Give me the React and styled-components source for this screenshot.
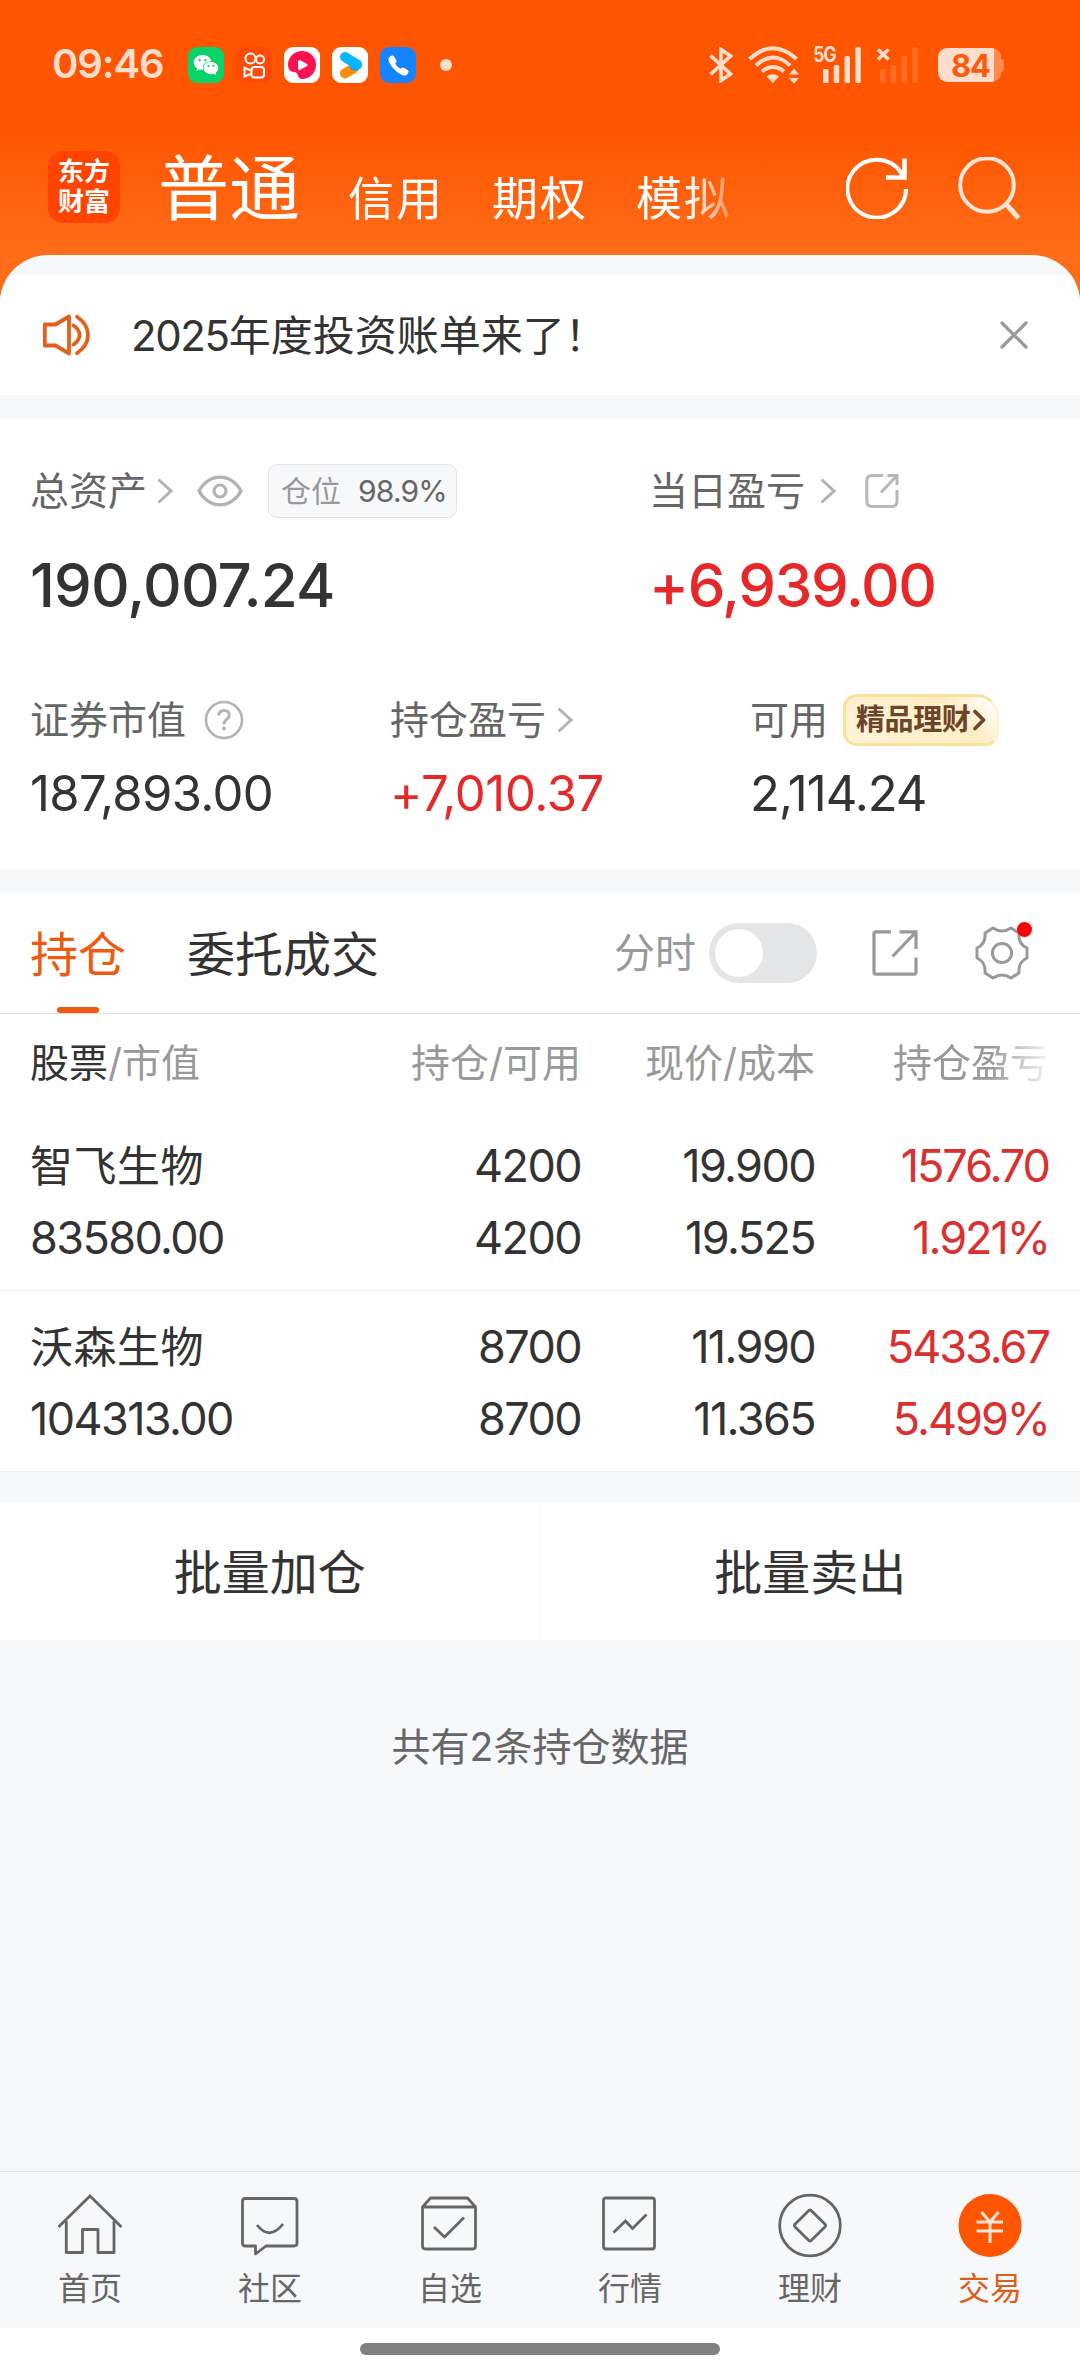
import React from "react";
import styled, { createGlobalStyle } from "styled-components";
import { AiFillWechat } from "react-icons/ai";
import { IoCall } from "react-icons/io5";

const GlobalStyle = createGlobalStyle`
  * {
    box-sizing: border-box;
  }
  body {
    margin: 0;
    background: #ffffff;
    font-family: Inter, "Noto Sans CJK SC", sans-serif;
    color: #333333;
  }
  svg {
    display: block;
    flex: none;
  }
`;

const Page = styled.div`
  width: 1080px;
  height: 2376px;
  display: flex;
  flex-direction: column;
  overflow: hidden;
  background: linear-gradient(#ff5500 0, #ff5500 132px, #ff6d1a 258px, #ff6d1a 320px, #ffffff 320px);
`;

const StatusBar = styled.div`
  height: 130px;
  padding: 0 76px 0 52px;
  display: flex;
  align-items: center;
  color: #ffddcc;
`;

const Clock = styled.div`
  width: 136px;
  font-size: 40px;
  font-weight: 600;
  line-height: 40px;
  letter-spacing: -1.1px;
  margin-top: -3px;
`;

const AppIcons = styled.div`
  display: flex;
  gap: 12px;
`;

const AppIcon = styled.div`
  width: 36px;
  height: 36px;
  border-radius: 9px;
  background: ${(props) => props.$bg};
  display: flex;
  align-items: center;
  justify-content: center;
  color: #ffffff;
`;

const MoreDot = styled.div`
  width: 12px;
  height: 12px;
  margin-left: 24px;
  border-radius: 50%;
  background: #ffddcc;
`;

const StatusRight = styled.div`
  margin-left: auto;
  display: flex;
  align-items: center;
`;

const StatusGroup = styled.div`
  display: flex;
  align-items: center;
  gap: ${(props) => props.$gap}px;
`;

const Header = styled.div`
  height: 125px;
  padding: 0 60px 0 48px;
  display: flex;
`;

const Logo = styled.div`
  width: 72px;
  height: 72px;
  margin-top: 21px;
  padding-top: 6px;
  border-radius: 15px;
  background: #ff4400;
  color: #ffffff;
  font-size: 26px;
  font-weight: 700;
  line-height: 30px;
  text-align: center;
`;

const Accounts = styled.div`
  width: 620px;
  margin-left: 38px;
  display: flex;
  color: #ffffff;
  font-size: 46px;
  line-height: 60px;
  letter-spacing: 2px;
  white-space: nowrap;
  overflow: hidden;
  -webkit-mask-image: linear-gradient(90deg, #000 0, #000 532px, transparent 590px);
  mask-image: linear-gradient(90deg, #000 0, #000 532px, transparent 590px);
`;

const Account = styled.span`
  flex: none;
  width: 144px;
  padding-top: 38px;
`;

const ActiveAccount = styled.span`
  flex: none;
  width: 190px;
  padding-top: 28px;
  font-size: 71px;
  letter-spacing: 0;
`;

const HeaderIcons = styled.div`
  margin-left: auto;
  padding-top: 27px;
  display: flex;
  gap: 50px;
`;

const Sheet = styled.div`
  flex: 1;
  padding-top: 20px;
  display: flex;
  flex-direction: column;
  overflow: hidden;
  border-radius: 48px 48px 0 0;
  background: #f7f8fa;
`;

const Notice = styled.div`
  height: 120px;
  padding: 0 52px 0 42px;
  display: flex;
  align-items: center;
  background: #ffffff;
  font-size: 42px;
  line-height: 60px;
`;

const NoticeText = styled.div`
  flex: 1;
  margin-left: 40px;
  padding-top: 1px;
`;

const NoticeYear = styled.span`
  letter-spacing: -1.4px;
`;

const Summary = styled.div`
  height: 450px;
  margin-top: 24px;
  padding: 44px 30px 0;
  background: #ffffff;
`;

const SummaryRow = styled.div`
  display: grid;
  grid-template-columns: ${(props) => props.$columns};
  margin-bottom: 73px;
`;

const Label = styled.div`
  height: 56px;
  display: flex;
  align-items: center;
  color: #666666;
  font-size: 39px;
  line-height: 56px;
  white-space: nowrap;
  svg {
    margin-left: ${(props) => (props.$gap === undefined ? 12 : props.$gap)}px;
  }
  svg + svg {
    margin-left: ${(props) => props.$iconGap || 24}px;
  }
`;

const Amount = styled.div`
  margin-top: ${(props) => (props.$large ? 32 : 14)}px;
  font-size: ${(props) => (props.$large ? 60 : 49)}px;
  font-weight: ${(props) => (props.$large ? 500 : 400)};
  line-height: ${(props) => (props.$large ? 68 : 64)}px;
  letter-spacing: ${(props) => props.$tracking || 0}px;
  color: ${(props) => (props.$up ? "#e82828" : "#333333")};
`;

const PositionTag = styled.div`
  width: 189px;
  height: 54px;
  margin-left: 25px;
  padding: 0 9px 0 12px;
  display: flex;
  align-items: center;
  justify-content: space-between;
  border: 1px solid #e3e4e6;
  border-radius: 9px;
  background: #f7f8fa;
  color: #999999;
  font-size: 30px;
  line-height: 52px;
  b {
    color: #666666;
    font-weight: 400;
    letter-spacing: -0.8px;
  }
`;

const WealthTag = styled.div`
  width: 156px;
  height: 52px;
  margin-left: 15px;
  padding-left: 10px;
  display: flex;
  align-items: center;
  border: 3px solid #fae29a;
  border-right-color: #fff5d6;
  border-radius: 14px 22px 14px 14px;
  background: linear-gradient(45deg, #fff3d8, #ffedc4 70%, #ffffff);
  color: #6b4528;
  font-size: 29px;
  font-weight: 700;
  line-height: 46px;
  letter-spacing: -0.4px;
  svg {
    margin-left: 3px;
  }
`;

const Holdings = styled.div`
  margin-top: 24px;
  background: #ffffff;
`;

const TabRow = styled.div`
  height: 121px;
  padding: 0 51px 0 30px;
  display: flex;
  border-bottom: 1px solid #e0e0e0;
`;

const Tab = styled.div`
  height: 120px;
  margin-right: 61px;
  display: flex;
  flex-direction: column;
  align-items: center;
  color: ${(props) => (props.$active ? "#f05a10" : "#333333")};
  font-size: 48px;
  line-height: 60px;
  padding-top: 32px;
  &::after {
    content: "";
    width: 42px;
    height: 6px;
    margin-top: 22px;
    border-radius: 3px;
    background: ${(props) => (props.$active ? "#f05a10" : "transparent")};
  }
`;

const Tools = styled.div`
  margin-left: auto;
  display: flex;
  align-items: center;
  color: #999999;
  font-size: 41px;
  line-height: 60px;
`;

const Toggle = styled.div`
  width: 108px;
  height: 60px;
  margin: 0 55px 0 13px;
  padding: 6px;
  border-radius: 30px;
  background: #e4e5e7;
  &::after {
    content: "";
    display: block;
    width: 48px;
    height: 48px;
    border-radius: 50%;
    background: #ffffff;
  }
`;

const Settings = styled.div`
  position: relative;
  margin-left: 57px;
`;

const RedDot = styled.div`
  position: absolute;
  top: -4px;
  right: -3px;
  width: 15px;
  height: 15px;
  border-radius: 50%;
  background: #ff0000;
`;

const TableHead = styled.div`
  height: 96px;
  padding: 2px 31px 0 30px;
  display: grid;
  grid-template-columns: 317px 234px 234px 234px;
  align-items: center;
  color: #999999;
  font-size: 39px;
  line-height: 60px;
  text-align: right;
  white-space: nowrap;
`;

const HeadName = styled.div`
  text-align: left;
  span {
    color: #333333;
  }
`;

const FadedHead = styled.div`
  -webkit-mask-image: linear-gradient(90deg, #000 0, #000 176px, transparent 240px);
  mask-image: linear-gradient(90deg, #000 0, #000 176px, transparent 240px);
`;

const StockRow = styled.div`
  height: 181px;
  padding: 20px 31px 0 30px;
  display: grid;
  grid-template-columns: 317px 234px 234px 234px;
  grid-template-rows: 72px 72px;
  border-bottom: 1px solid #eeeeee;
  font-size: 45px;
  line-height: 72px;
  letter-spacing: -1.6px;
  text-align: right;
`;

const StockName = styled.div`
  text-align: left;
  font-size: 43px;
  letter-spacing: 0.5px;
`;

const MarketValue = styled.div`
  text-align: left;
`;

const Profit = styled.div`
  color: #d93030;
  letter-spacing: -2px;
`;

const BatchRow = styled.div`
  height: 138px;
  margin-top: 30px;
  display: flex;
  background: #ffffff;
`;

const BatchButton = styled.div`
  flex: 1;
  padding-top: 2px;
  font-size: 48px;
  line-height: 138px;
  text-align: center;
  & + & {
    border-left: 1px solid #f4f5f7;
  }
`;

const Total = styled.div`
  margin-top: 77px;
  color: #666666;
  font-size: 39px;
  line-height: 60px;
  text-align: center;
`;

const TabBar = styled.div`
  height: 157px;
  margin-top: auto;
  display: flex;
  border-top: 1px solid #e3e4e6;
  background: #f7f8fa;
`;

const TabItem = styled.div`
  width: 180px;
  padding-top: 20px;
  display: flex;
  flex-direction: column;
  align-items: center;
  color: ${(props) => (props.$active ? "#d95f1c" : "#666666")};
  font-size: 32px;
  line-height: 40px;
  svg {
    margin-bottom: 11px;
  }
`;

const HomeArea = styled.div`
  height: 48px;
  padding-top: 15px;
  background: #ffffff;
`;

const HomeBar = styled.div`
  width: 360px;
  height: 12px;
  margin: 0 auto;
  border-radius: 6px;
  background: #808080;
`;

const Kuaishou = () => (
  <svg width="36" height="36" viewBox="0 0 36 36" fill="none" stroke="#fff" strokeWidth="2">
    <circle cx="14.5" cy="11.5" r="5" />
    <circle cx="24" cy="12.5" r="4" />
    <rect x="15.5" y="20" width="12.5" height="10.5" rx="3" />
    <path d="M15 23.5 L8.5 20.8 V29.5 L15 27" />
  </svg>
);

const RedPlayer = () => (
  <svg width="36" height="36" viewBox="0 0 36 36">
    <path d="M4 18 A14 14 0 1 1 18 32 C13 32 15 25 10 25 C6 25 4 22 4 18Z" fill="#ff1050" />
    <path d="M15.5 14.5 L22 18 L15.5 21.5Z" fill="#fff" stroke="#fff" strokeWidth="3" strokeLinejoin="round" />
  </svg>
);

const BluePlayer = () => (
  <svg width="36" height="36" viewBox="0 0 36 36" fill="none" strokeWidth="10" strokeLinecap="round">
    <path d="M13 26.5 L22 21" stroke="#ff8a0c" />
    <path d="M25 17.5 L22.5 19" stroke="#2a9de8" />
    <path d="M13 10 L25 17.5" stroke="#06b8fb" />
  </svg>
);

const Bluetooth = () => (
  <svg width="24" height="36" viewBox="0 0 24 36" fill="none" stroke="#ffddcc" strokeWidth="3.6">
    <path d="M1.5 8.5 L21.5 27 L12 33.5 V2.5 L21.5 9 L1.5 27.5" />
  </svg>
);

const Wifi = () => (
  <svg width="52" height="38" viewBox="0 0 52 38" fill="none" stroke="#ffddcc" strokeWidth="3.8">
    <path d="M1.5 13 Q25 -8.5 48.5 13" />
    <path d="M8 19.5 Q25 3.5 42 19.5" />
    <path d="M14 25.5 Q25 16.5 36 25.5" />
    <path d="M18.5 30.5 Q25 26 31 30.5 L24.7 37Z" fill="#ffddcc" stroke="none" />
    <path d="M41 28.5 L46 22.5 L51 28.5Z M41 32 L46 37.5 L51 32Z" fill="#ffddcc" stroke="none" />
  </svg>
);

const SignalText = styled.div`
  width: 10px;
  margin-left: 13px;
  align-self: flex-start;
  font-size: 21px;
  font-weight: 700;
  line-height: 18px;
  letter-spacing: -1.5px;
  transform: scaleX(0.85);
  transform-origin: left;
  white-space: nowrap;
`;

const Signal = ({ off }) => (
  <svg width={off ? 42 : 39} height="36" viewBox={off ? "-3 0 42 36" : "0 0 39 36"} fill="#ffddcc">
    <g opacity={off ? 0.17 : 1}>
      <rect x="0" y="22" width="5.5" height="14" rx="1.5" />
      <rect x="10.7" y="18" width="5.5" height="18" rx="1.5" />
      <rect x="21.5" y="9" width="5.5" height="27" rx="1.5" />
      <rect x="32.3" y="0" width="5.5" height="36" rx="1.5" />
    </g>
    {off && <path d="M-2 2.5 L8.5 12.5 M8.5 2.5 L-2 12.5" stroke="#ffddcc" strokeWidth="3.6" />}
  </svg>
);

const Battery = styled.div`
  width: 63px;
  height: 34px;
  margin-left: 19px;
  padding-left: 2px;
  border-radius: 9px;
  background: linear-gradient(90deg, #ffddcc 56px, #ff8b50 56px);
  color: #ff5a0a;
  font-size: 31px;
  font-weight: 700;
  line-height: 35px;
  letter-spacing: -1px;
  text-align: center;
`;

const BatteryTip = styled.div`
  width: 3px;
  height: 13px;
  border-radius: 0 3px 3px 0;
  background: #ff8b50;
`;

const Refresh = () => (
  <svg width="62" height="62" viewBox="0 0 62 62" fill="none" stroke="#fff" strokeWidth="4">
    <path d="M60 32 A29.3 29 0 1 1 55 15.5 L58 20" />
    <path d="M58.5 1.5 V20.5 H40" strokeWidth="4.6" />
  </svg>
);

const Search = () => (
  <svg width="62" height="64" viewBox="0 0 62 64" fill="none" stroke="#ffe6d6" strokeWidth="4">
    <circle cx="29" cy="28" r="26.8" />
    <path d="M48 47 L60.5 61" strokeWidth="5" />
  </svg>
);

const Speaker = () => (
  <svg width="49" height="42" viewBox="0 0 49 42" fill="none" stroke="#e0601c" strokeWidth="3.8" strokeLinejoin="round" strokeLinecap="round">
    <path d="M2.8 10.5 H13.5 L27 2.5 V39.5 L13.5 31.5 H2.8Z" />
    <path d="M31.5 11.5 Q37.5 15.5 37.5 21 Q37.5 26.5 31.5 30.5" />
    <path d="M35 2.8 Q46 10.5 46 21 Q46 31.5 35 39.2" />
  </svg>
);

const Close = () => (
  <svg width="28" height="28" viewBox="0 0 28 28" stroke="#999" strokeWidth="3.2" strokeLinecap="round">
    <path d="M2 2 L26 26 M26 2 L2 26" />
  </svg>
);

const Chevron = () => (
  <svg width="16" height="28" viewBox="0 0 16 28" fill="none" stroke="#b3b3b3" strokeWidth="3">
    <path d="M1.5 2.5 L14 14 L1.5 25.5" />
  </svg>
);

const TagChevron = () => (
  <svg width="13" height="22" viewBox="0 0 13 22" fill="none" stroke="#6b4528" strokeWidth="3.6" strokeLinecap="round" strokeLinejoin="round">
    <path d="M2 2.5 L10.5 11 L2 19.5" />
  </svg>
);

const Eye = () => (
  <svg width="46" height="32" viewBox="0 0 46 32" fill="none" stroke="#b3b3b3" strokeWidth="3.2">
    <path d="M2 16 C6 8 14 2.2 23 2.2 C32 2.2 40 8 44 16 C40 24 32 29.8 23 29.8 C14 29.8 6 24 2 16Z" />
    <circle cx="23" cy="16" r="6" />
  </svg>
);

const ShareSmall = () => (
  <svg width="34" height="36" viewBox="0 0 34 36" fill="none" stroke="#b8b8b8" strokeWidth="3">
    <path d="M18 2.5 H7 Q1.8 2.5 1.8 8 V28 Q1.8 33.5 7 33.5 H27 Q32 33.5 32 28 V17" />
    <path d="M22.5 2.5 H32 V12 M32 2.5 L16 19.5" />
  </svg>
);

const ShareLarge = () => (
  <svg width="46" height="48" viewBox="0 0 46 48" fill="none" stroke="#999" strokeWidth="3.2">
    <path d="M19 2.8 H4 Q2 2.8 2 4.8 V43 Q2 45.2 4 45.2 H42 Q44 45.2 44 43 V28.5" />
    <path d="M27.5 2.8 H44 V20 M44 2.8 L20.5 27.5" />
  </svg>
);

const Question = () => (
  <svg width="40" height="40" viewBox="0 0 40 40" fill="none" stroke="#b3b3b3" strokeWidth="2.6">
    <circle cx="20" cy="20" r="18" />
    <path d="M14.8 15.5 Q15 10.5 20 10.5 Q25.2 10.5 25.2 15.2 Q25.2 17.6 22.4 19.6 Q20 21.4 20 24.5" strokeWidth="3" />
    <circle cx="20" cy="28.6" r="2" fill="#b3b3b3" stroke="none" />
  </svg>
);

const Gear = () => (
  <svg width="54" height="54" viewBox="0 0 54 54" fill="none" stroke="#999" strokeWidth="3" strokeLinejoin="round">
    <path d="M18 2 Q27 8 36 2 L44 7 Q43 18 52 22 V32 Q43 36 44 47 L36 52 Q27 46 18 52 L10 47 Q11 36 2 32 V22 Q11 18 10 7Z" />
    <circle cx="27" cy="27" r="9.6" />
  </svg>
);

const HomeIcon = () => (
  <svg width="66" height="66" viewBox="0 0 66 66" fill="none" stroke="#666" strokeWidth="2.8">
    <path d="M1.5 35 L33 4 L64.5 35" />
    <path d="M9.3 29 V60.5 H25.5 V37.5 H41 V60.5 H57 V29" strokeLinejoin="round" />
  </svg>
);

const ChatIcon = () => (
  <svg width="66" height="66" viewBox="0 0 66 66" fill="none" stroke="#666" strokeWidth="2.8" strokeLinejoin="round">
    <path d="M8 6.5 H57 Q60 6.5 60 9.5 V51 Q60 54 57 54 H29 L18.5 62 V54 H8 Q5.5 54 5.5 51 V9.5 Q5.5 6.5 8 6.5Z" />
    <path d="M20 33 Q32.5 49 46 32" />
  </svg>
);

const PickIcon = () => (
  <svg width="66" height="66" viewBox="0 0 66 66" fill="none" stroke="#666" strokeWidth="2.8" strokeLinejoin="round">
    <path d="M5.5 15 L13.5 6 H50.5 L58.5 15 V54 Q58.5 57 55.5 57 H8.5 Q5.5 57 5.5 54Z M5.5 15 H58.5" />
    <path d="M17 35 L27.5 45 L47 25.5" />
  </svg>
);

const ChartIcon = () => (
  <svg width="66" height="66" viewBox="0 0 66 66" fill="none" stroke="#666" strokeWidth="2.8">
    <rect x="6.5" y="6" width="51" height="51" rx="2.5" />
    <path d="M16.5 40.5 L28.5 29 L35.5 36.5 L49.5 22.5" />
  </svg>
);

const WealthIcon = () => (
  <svg width="66" height="66" viewBox="0 0 66 66" fill="none" stroke="#666" strokeWidth="2.8">
    <circle cx="33" cy="33.5" r="30.3" />
    <rect x="21.5" y="22" width="23" height="23" rx="2" transform="rotate(45 33 33.5)" />
  </svg>
);

const TradeIcon = () => (
  <svg width="66" height="66" viewBox="0 0 66 66" fill="none" stroke="#ffe6d6" strokeWidth="3">
    <circle cx="33" cy="33.5" r="31.5" fill="#ff5500" stroke="none" />
    <path d="M24.5 20 L33 30 L41.5 20 M33 30 V51 M19.5 30 H46 M19.5 39 H46" />
  </svg>
);

const stocks = [
  { name: "智飞生物", value: "83580.00", amount: "4200", usable: "4200", price: "19.900", cost: "19.525", profit: "1576.70", rate: "1.921%" },
  { name: "沃森生物", value: "104313.00", amount: "8700", usable: "8700", price: "11.990", cost: "11.365", profit: "5433.67", rate: "5.499%" },
];

const tabs = [
  { label: "首页", icon: <HomeIcon /> },
  { label: "社区", icon: <ChatIcon /> },
  { label: "自选", icon: <PickIcon /> },
  { label: "行情", icon: <ChartIcon /> },
  { label: "理财", icon: <WealthIcon /> },
  { label: "交易", icon: <TradeIcon />, active: true },
];

function App() {
  return (
    <>
      <GlobalStyle />
      <Page>
        <StatusBar>
          <Clock>09:46</Clock>
          <AppIcons>
            <AppIcon $bg="#08d268"><AiFillWechat size={28} /></AppIcon>
            <AppIcon $bg="#ff4a0a"><Kuaishou /></AppIcon>
            <AppIcon $bg="#ffffff"><RedPlayer /></AppIcon>
            <AppIcon $bg="#ffffff"><BluePlayer /></AppIcon>
            <AppIcon $bg="#1684fc"><IoCall size={23} /></AppIcon>
          </AppIcons>
          <MoreDot />
          <StatusRight>
            <StatusGroup $gap={15}>
              <Bluetooth />
              <Wifi />
            </StatusGroup>
            <SignalText>5G</SignalText>
            <StatusGroup $gap={15}>
              <Signal />
              <Signal off />
            </StatusGroup>
            <Battery>84</Battery>
            <BatteryTip />
          </StatusRight>
        </StatusBar>

        <Header>
          <Logo>东方<br />财富</Logo>
          <Accounts>
            <ActiveAccount>普通</ActiveAccount>
            <Account>信用</Account>
            <Account>期权</Account>
            <Account>模拟</Account>
          </Accounts>
          <HeaderIcons>
            <Refresh />
            <Search />
          </HeaderIcons>
        </Header>

        <Sheet>
          <Notice>
            <Speaker />
            <NoticeText><NoticeYear>2025</NoticeYear>年度投资账单来了！</NoticeText>
            <Close />
          </Notice>

          <Summary>
            <SummaryRow $columns="619px 1fr">
              <div>
                <Label $gap={10}>
                  总资产<Chevron />
                  <Eye />
                  <PositionTag>仓位<b>98.9%</b></PositionTag>
                </Label>
                <Amount $large $tracking={-0.85}>190,007.24</Amount>
              </div>
              <div>
                <Label $gap={15} $iconGap={29}>
                  当日盈亏<Chevron />
                  <ShareSmall />
                </Label>
                <Amount $large $up $tracking={-1.4}>+6,939.00</Amount>
              </div>
            </SummaryRow>
            <SummaryRow $columns="360px 360px 1fr">
              <div>
                <Label $gap={18}>证券市值<Question /></Label>
                <Amount $tracking={-0.65}>187,893.00</Amount>
              </div>
              <div>
                <Label $gap={11}>持仓盈亏<Chevron /></Label>
                <Amount $up $tracking={-0.35}>+7,010.37</Amount>
              </div>
              <div>
                <Label $gap={0}>可用<WealthTag>精品理财<TagChevron /></WealthTag></Label>
                <Amount $tracking={-1}>2,114.24</Amount>
              </div>
            </SummaryRow>
          </Summary>

          <Holdings>
            <TabRow>
              <Tab $active>持仓</Tab>
              <Tab>委托成交</Tab>
              <Tools>
                分时
                <Toggle />
                <ShareLarge />
                <Settings>
                  <Gear />
                  <RedDot />
                </Settings>
              </Tools>
            </TabRow>
            <TableHead>
              <HeadName><span>股票</span>/市值</HeadName>
              <div>持仓/可用</div>
              <div>现价/成本</div>
              <FadedHead>持仓盈亏</FadedHead>
            </TableHead>
            {stocks.map((stock) => (
              <StockRow key={stock.name}>
                <StockName>{stock.name}</StockName>
                <div>{stock.amount}</div>
                <div>{stock.price}</div>
                <Profit>{stock.profit}</Profit>
                <MarketValue>{stock.value}</MarketValue>
                <div>{stock.usable}</div>
                <div>{stock.cost}</div>
                <Profit>{stock.rate}</Profit>
              </StockRow>
            ))}
          </Holdings>

          <BatchRow>
            <BatchButton>批量加仓</BatchButton>
            <BatchButton>批量卖出</BatchButton>
          </BatchRow>
          <Total>共有2条持仓数据</Total>

          <TabBar>
            {tabs.map((tab) => (
              <TabItem key={tab.label} $active={tab.active}>
                {tab.icon}
                {tab.label}
              </TabItem>
            ))}
          </TabBar>
          <HomeArea>
            <HomeBar />
          </HomeArea>
        </Sheet>
      </Page>
    </>
  );
}

export default App;
